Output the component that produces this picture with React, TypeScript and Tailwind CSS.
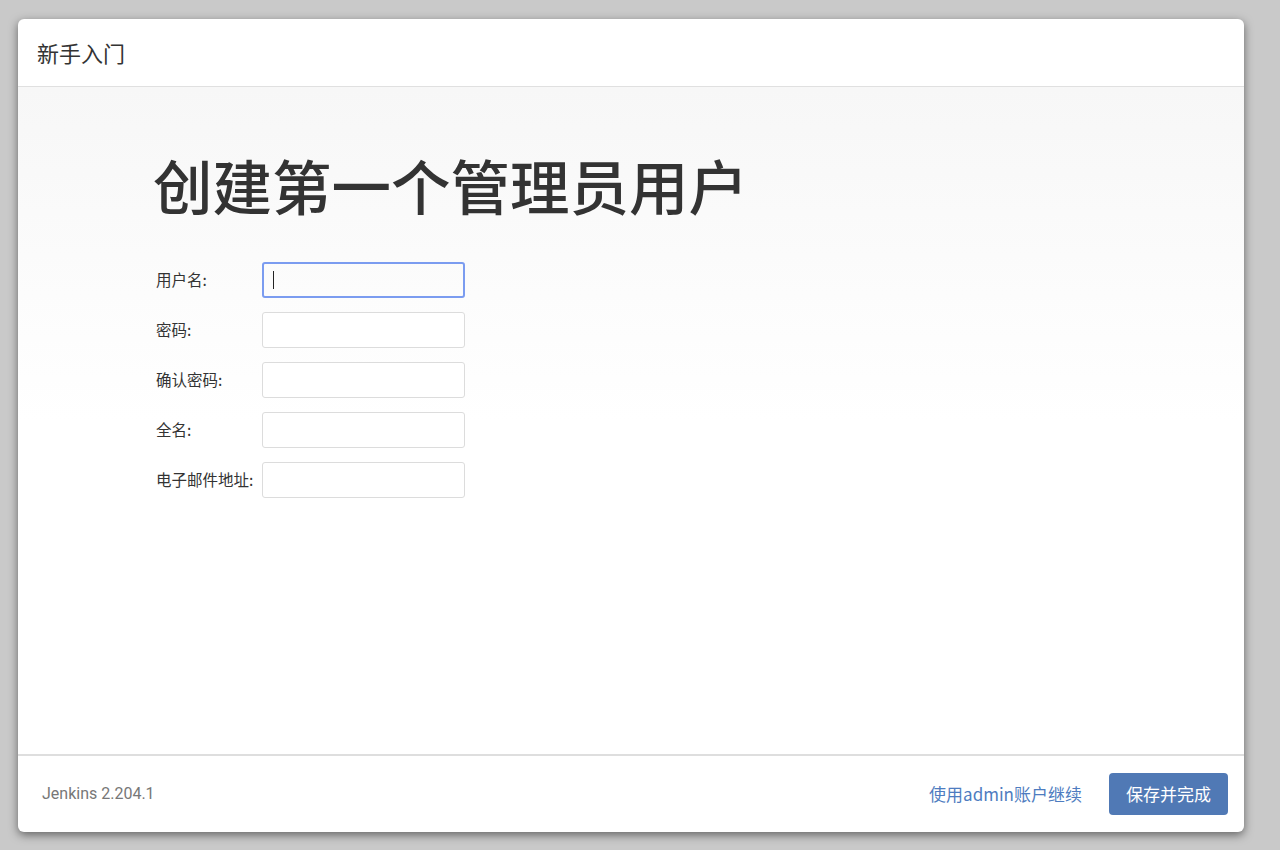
export default function App() {
  const fields = ["用户名:", "密码:", "确认密码:", "全名:", "电子邮件地址:"];
  return (
    <div
      className="h-[850px] w-[1280px] bg-[#c9c9c9] pt-[19px] pl-[18px]"
      style={{ fontFamily: '"Noto Sans CJK SC", "Liberation Sans", sans-serif' }}
    >
      <div className="flex h-[813px] w-[1226px] flex-col overflow-hidden rounded-[6px] bg-white shadow-[0_3px_10px_rgba(0,0,0,0.5)]">
        <div className="flex h-[68px] items-center border-b border-[#e0e0e0] pl-[19px]">
          <h4 className="text-[22px] text-[#333]">新手入门</h4>
        </div>
        <div className="flex-1 bg-gradient-to-b from-[#f7f7f7] via-white to-white pl-[135px] pt-[57px]">
          <h1 className="text-[59.5px] leading-[80px] font-medium text-[#333]">创建第一个管理员用户</h1>
          <div className="mt-[38px] flex flex-col gap-[14px] pl-[3px]">
            {fields.map((f, i) => (
              <div key={f} className="flex items-center">
                <label className="w-[106px] text-[15.5px] text-[#333]">{f}</label>
                <div
                  className={
                    i === 0
                      ? "flex h-[36px] w-[203px] items-center rounded-[3px] border-2 border-[#7b9cf0] pl-[9px]"
                      : "h-[36px] w-[203px] rounded-[3px] border border-[#dcdcdc] bg-white"
                  }
                >
                  {i === 0 && <span className="h-[18px] w-px bg-[#222]" />}
                </div>
              </div>
            ))}
          </div>
        </div>
        <div className="flex h-[78px] items-center justify-between border-t-2 border-[#dedede] pl-[24px] pr-[16px]">
          <span className="text-[16px] text-[#777]" style={{ fontFamily: "Roboto, sans-serif" }}>
            Jenkins 2.204.1
          </span>
          <div className="flex items-center gap-[27px]">
            <span className="text-[17px] text-[#4e7cc0]">使用admin账户继续</span>
            <button className="h-[42px] w-[119px] rounded-[4px] bg-[#5079b5] text-[17px] text-white">
              保存并完成
            </button>
          </div>
        </div>
      </div>
    </div>
  );
}
